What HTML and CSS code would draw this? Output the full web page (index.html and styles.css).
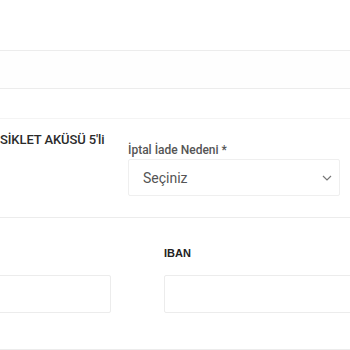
FILE: index.html
```html
<html lang="tr">
<head>
    <meta charset="UTF-8">
    <meta name="viewport" content="width=device-width, initial-scale=1.0">
    <title>İptal / İade Talebi</title>
    <link rel="stylesheet" href="styles.css">
</head>
<body>
    <div class="order-table">
        <div class="row row-head"></div>
        <div class="row row-sub"></div>
        <div class="row row-gap"></div>

        <div class="row row-item">
            <div class="cell product">SİKLET AKÜSÜ 5'li</div>
            <div class="cell reason">
                <label for="reason">İptal İade Nedeni *</label>
                <div class="select-wrap">
                    <select id="reason">
                        <option>Seçiniz</option>
                        <option>Ürün hasarlı geldi</option>
                        <option>Yanlış ürün gönderildi</option>
                        <option>Vazgeçtim</option>
                    </select>
                    <svg class="chevron" width="10" height="6" viewBox="0 0 10 6">
                        <path d="M1 1l4 4 4-4" fill="none" stroke="#777" stroke-width="1.2"/>
                    </svg>
                </div>
            </div>
        </div>

        <div class="row row-refund">
            <div class="field field-owner">
                <input type="text" id="owner">
            </div>
            <div class="field field-iban">
                <label for="iban" class="iban-label">IBAN</label>
                <input type="text" id="iban">
            </div>
        </div>
    </div>
</body>
</html>
```

FILE: styles.css
```css
body {
    margin: 0;
    font-family: Roboto, "Liberation Sans", Arial, sans-serif;
    background-color: #fff;
    color: #333;
    overflow: hidden;
}
.order-table {
    margin-left: -40px;
    width: 560px;
}
.row {
    display: flex;
    border-bottom: 1px solid #ececec;
}
.row-head {
    height: 50px;
}
.row-sub {
    height: 37px;
    background-color: #fefefe;
}
.row-gap {
    height: 29px;
    border-bottom-color: #f4f4f4;
}
.row-item {
    height: 98px;
}
.product {
    width: 115px;
    padding-left: 40px;
    padding-top: 13px;
    font-size: 13px;
    line-height: 15px;
    font-weight: 500;
    letter-spacing: -0.1px;
    color: #2b2b2b;
    white-space: nowrap;
}
.reason {
    padding-left: 13px;
    padding-top: 24px;
}
.reason label {
    display: block;
    font-size: 12px;
    line-height: 14px;
    font-weight: 500;
    color: #555;
    margin-bottom: 2px;
}
.select-wrap {
    position: relative;
    width: 212px;
}
select {
    display: block;
    width: 100%;
    height: 37px;
    padding: 0 14px;
    border: 1px solid #efefef;
    border-radius: 2px;
    background-color: #fff;
    font-family: Roboto, "Liberation Sans", Arial, sans-serif;
    font-size: 14px;
    color: #555;
    -webkit-appearance: none;
    appearance: none;
    box-sizing: border-box;
}
.chevron {
    position: absolute;
    right: 8px;
    top: 16px;
    pointer-events: none;
}
.row-refund {
    height: 131px;
    align-items: flex-start;
}
.field {
    display: flex;
    flex-direction: column;
    padding-top: 29px;
}
.field-owner {
    width: 151px;
    padding-top: 57px;
    margin-right: 53px;
}
.field-iban {
    flex: 1;
}
.iban-label {
    font-family: "Liberation Sans", Arial, sans-serif;
    font-size: 11px;
    line-height: 13px;
    font-weight: bold;
    color: #222;
    margin-bottom: 15px;
}
input[type="text"] {
    height: 38px;
    border: 1px solid #ececec;
    border-radius: 2px;
    padding: 0 10px;
    box-sizing: border-box;
}
```
